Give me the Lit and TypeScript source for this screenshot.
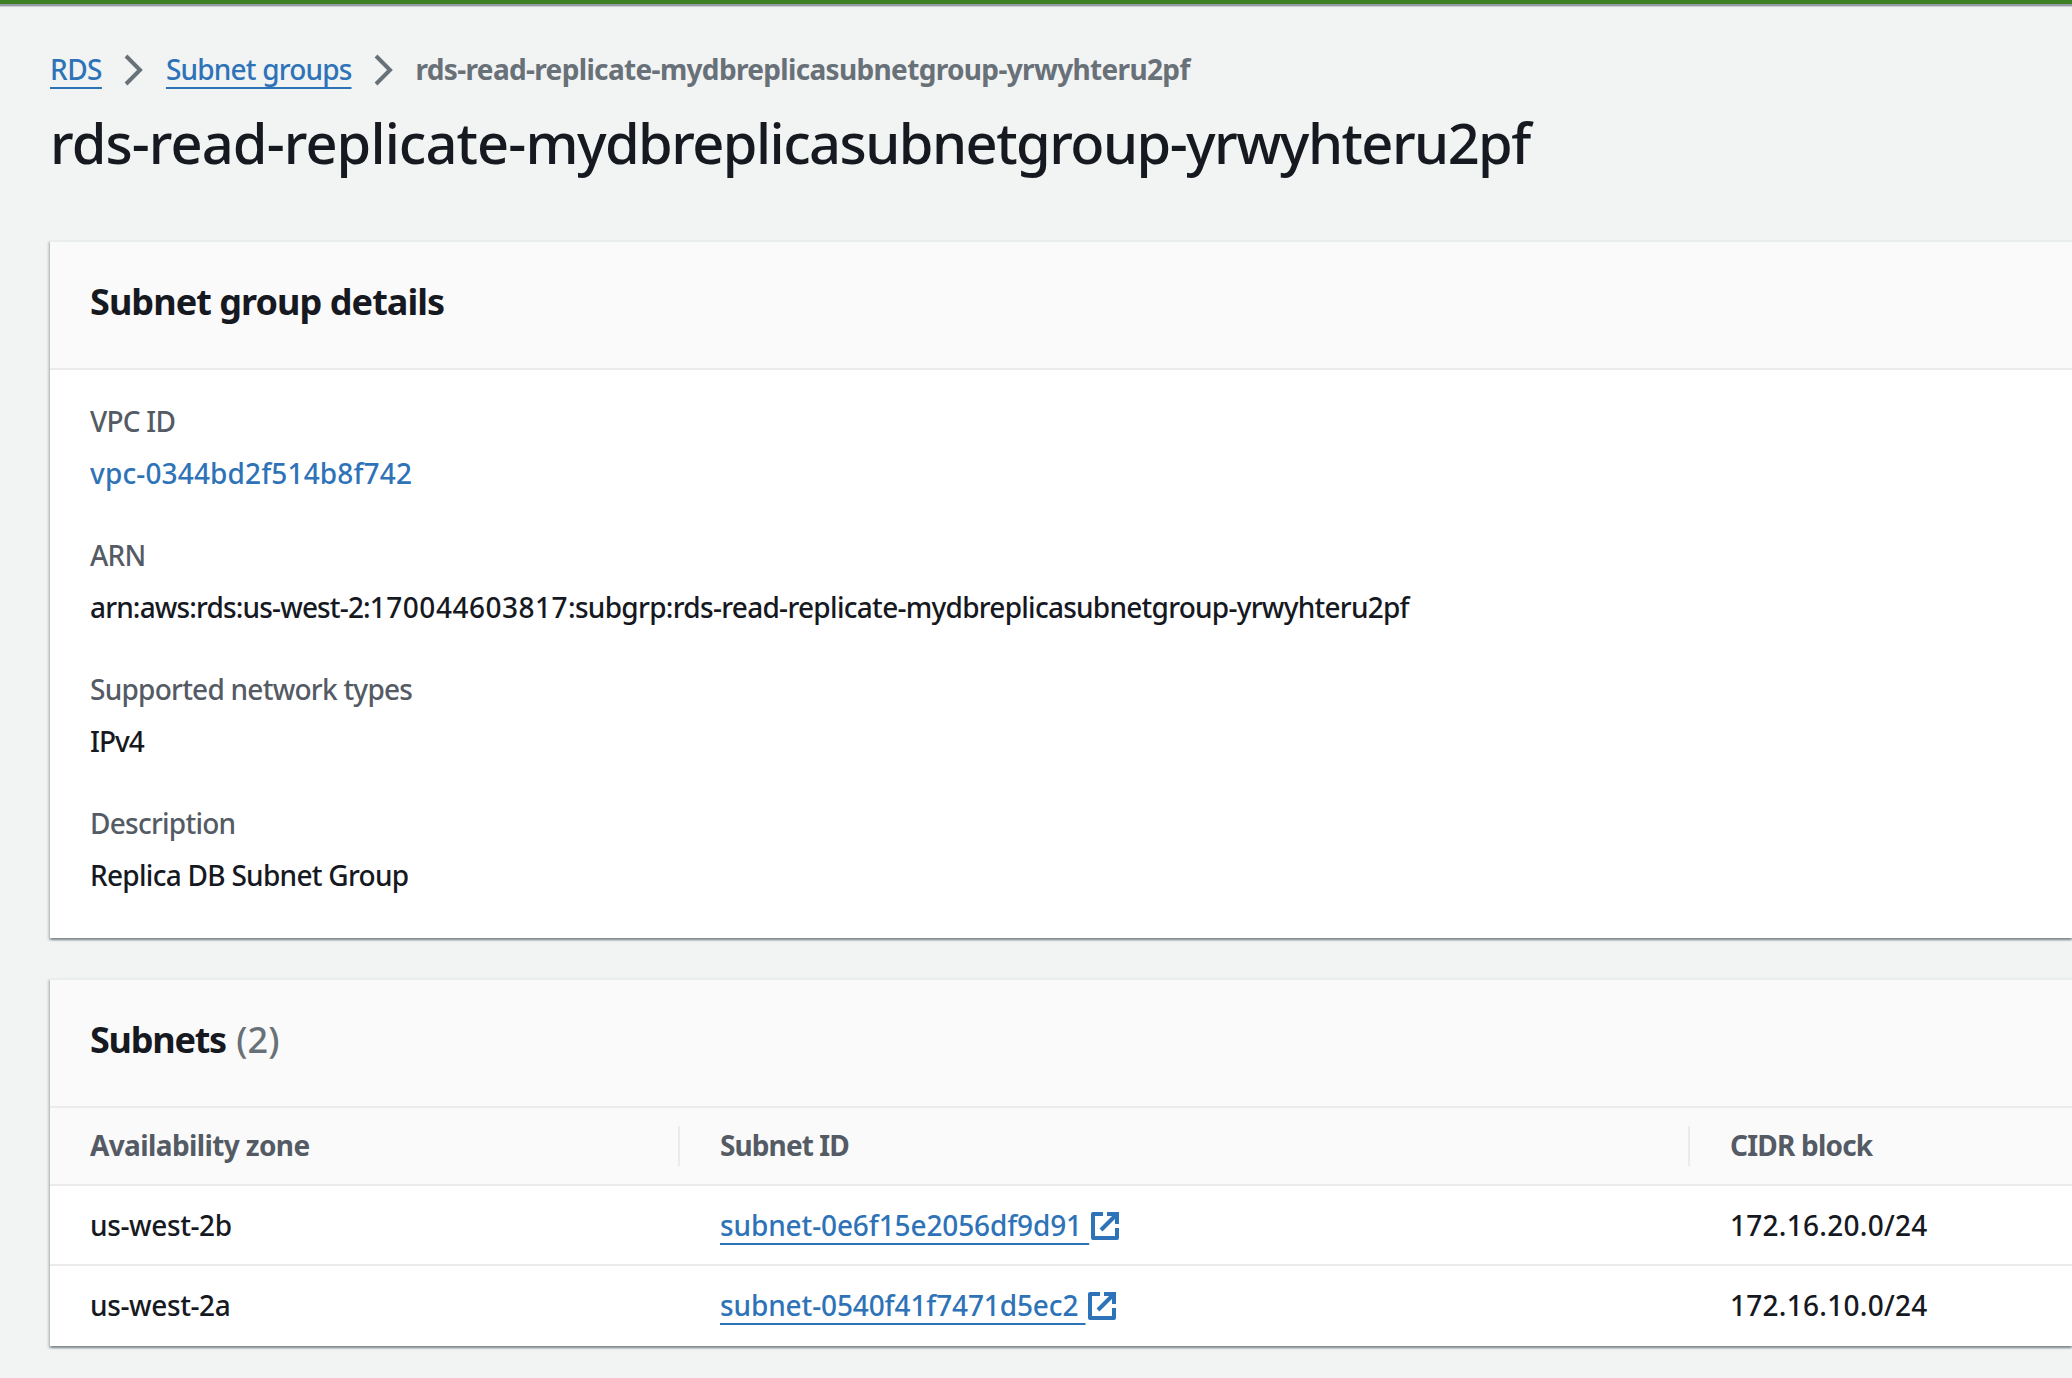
import { LitElement, html, css, svg } from "lit";
import { customElement } from "lit/decorators.js";

const STACK_PREFIX = "rds-read-replicate-";
const STACK_RESOURCE = "mydbreplicasubnetgroup-yrwyhteru2pf";

const groupName = html`<span class="prefix">${STACK_PREFIX}</span><span class="resource">${STACK_RESOURCE}</span>`;

const DETAILS = [
  { label: "VPC ID", value: html`<a>vpc-0344bd2f514b8f742</a>`, kind: "link" },
  {
    label: "ARN",
    value: html`<span class="service">arn:aws:rds:us-west-2:</span><span class="account">170044603817</span><span class="prefix">:subgrp:${STACK_PREFIX}</span><span class="resource">${STACK_RESOURCE}</span>`,
    kind: "arn",
  },
  { label: "Supported network types", value: "IPv4", kind: "short" },
  { label: "Description", value: "Replica DB Subnet Group", kind: "prose" },
];

const SUBNETS = [
  { zone: "us-west-2b", id: "subnet-0e6f15e2056df9d91", cidr: "172.16.20.0/24" },
  { zone: "us-west-2a", id: "subnet-0540f41f7471d5ec2", cidr: "172.16.10.0/24" },
];

const chevron = html`<svg class="chevron" viewBox="0 0 16 16" aria-hidden="true">
  ${svg`<path d="m4 1 7 7-7 7" />`}
</svg>`;

const external = html`<svg class="external" viewBox="0 0 16 16" aria-hidden="true">
  ${svg`<path d="M9 2h5v5" /><path d="m6 10 8-8" /><path class="frame" d="M14 9v5H2V2h5" />`}
</svg>`;

@customElement("app-root")
export class AppRoot extends LitElement {
  static styles = css`
    :host {
      display: block;
      box-sizing: border-box;
      height: 1378px;
      overflow: hidden;
      background: #f2f3f3;
      color: #16191f;
      font: 500 28px/44px "Noto Sans", "Open Sans", sans-serif;
      white-space: nowrap;
    }
    *,
    *::before {
      box-sizing: border-box;
    }
    .topbar {
      height: 4px;
      background: #3e8024;
      box-shadow: 0 2px 0 #979aa2, 0 3px 0 #cfd2d5;
    }
    .page {
      padding: 43px 0 0 50px;
    }
    a {
      color: #2e73b8;
      text-decoration: none;
    }
    .underlined {
      white-space: pre;
      text-decoration: underline 2px;
      text-underline-offset: 7px;
      text-decoration-skip-ink: none;
      letter-spacing: -0.12px;
    }
    .crumbs {
      display: flex;
      align-items: center;
      gap: 16px;
      height: 44px;
    }
    .crumbs a {
      letter-spacing: -0.82px;
    }
    .crumbs a.root {
      letter-spacing: -0.55px;
    }
    .crumbs .current {
      color: #687078;
      font-weight: 700;
      letter-spacing: -0.66px;
    }
    svg {
      width: 32px;
      height: 32px;
      fill: none;
      stroke-width: 2;
    }
    .chevron {
      flex: none;
      margin-top: 2px;
      stroke: #687078;
    }
    .external {
      stroke: #2e73b8;
      vertical-align: -6px;
    }
    .frame {
      stroke-linejoin: round;
    }
    h1,
    h2,
    dl,
    dt,
    dd {
      margin: 0;
    }
    h1 {
      margin-top: 15px;
      font-size: 56px;
      line-height: 72px;
      font-weight: 500;
    }
    h1 .prefix {
      letter-spacing: -0.91px;
    }
    h1 .resource {
      letter-spacing: -1.55px;
    }
    .stack {
      display: flex;
      flex-direction: column;
      gap: 40px;
      margin-top: 62px;
    }
    .card {
      background: #fff;
      box-shadow: 0 2px 2px 0 rgba(0, 28, 36, 0.3), 2px 2px 2px 0 rgba(0, 28, 36, 0.15),
        -2px 2px 2px 0 rgba(0, 28, 36, 0.15);
    }
    .card header {
      height: 130px;
      padding: 38px 40px 0;
      border-top: 2px solid #eaeded;
      border-bottom: 2px solid #ebebeb;
      background: #fafafa;
    }
    h2 {
      font-size: 36px;
      line-height: 44px;
      font-weight: 700;
      letter-spacing: -0.94px;
    }
    h2 .name {
      margin-right: 2px;
      letter-spacing: -1.25px;
    }
    h2 .count {
      color: #687078;
      font-weight: 500;
      letter-spacing: 0.1px;
    }
    dl {
      display: flex;
      flex-direction: column;
      gap: 38px;
      padding: 29px 40px 41px;
    }
    dt {
      color: #545b64;
      letter-spacing: -0.75px;
    }
    dd {
      margin-top: 8px;
    }
    .link {
      letter-spacing: 0.14px;
    }
    .arn .service {
      letter-spacing: -0.85px;
    }
    .arn .account {
      letter-spacing: 0.5px;
    }
    .arn .prefix {
      letter-spacing: -0.7px;
    }
    .arn .resource {
      letter-spacing: -0.75px;
    }
    .short {
      letter-spacing: -1px;
    }
    .prose {
      letter-spacing: -0.72px;
    }
    .row {
      display: grid;
      grid-template-columns: 630px 1010px 1fr;
      height: 80px;
      padding-top: 17px;
      border-bottom: 2px solid #ebebeb;
    }
    .row:last-child {
      border-bottom: 0;
    }
    .row > * {
      padding-left: 40px;
    }
    .head {
      height: 78px;
      padding: 18px 0 0;
      background: #fafafa;
      color: #545b64;
      font-weight: 700;
      line-height: 38px;
      letter-spacing: -0.62px;
    }
    .head > * {
      height: 40px;
      border-right: 2px solid #ebebeb;
    }
    .head > :nth-child(2) {
      letter-spacing: -0.9px;
    }
    .head > :last-child {
      border-right: 0;
      letter-spacing: -0.8px;
    }
    .zone {
      letter-spacing: -0.38px;
    }
    .cidr {
      letter-spacing: 0.27px;
    }
  `;

  render() {
    return html`
      <div class="topbar"></div>
      <div class="page">
        <nav class="crumbs">
          <a class="underlined root">RDS</a>${chevron}
          <a class="underlined">Subnet groups</a>${chevron}
          <span class="current">${groupName}</span>
        </nav>
        <h1>${groupName}</h1>
        <main class="stack">
          <section class="card">
            <header><h2>Subnet group details</h2></header>
            <dl>
              ${DETAILS.map(
                (d) => html`<div>
                  <dt>${d.label}</dt>
                  <dd class=${d.kind}>${d.value}</dd>
                </div>`
              )}
            </dl>
          </section>
          <section class="card">
            <header>
              <h2><span class="name">Subnets</span> <span class="count">(${SUBNETS.length})</span></h2>
            </header>
            <div class="table">
              <div class="row head">
                <div>Availability zone</div>
                <div>Subnet ID</div>
                <div>CIDR block</div>
              </div>
              ${SUBNETS.map(
                (s) => html`<div class="row">
                  <div class="zone">${s.zone}</div>
                  <div><a class="underlined">${s.id + " "}</a>${external}</div>
                  <div class="cidr">${s.cidr}</div>
                </div>`
              )}
            </div>
          </section>
        </main>
      </div>
    `;
  }
}
